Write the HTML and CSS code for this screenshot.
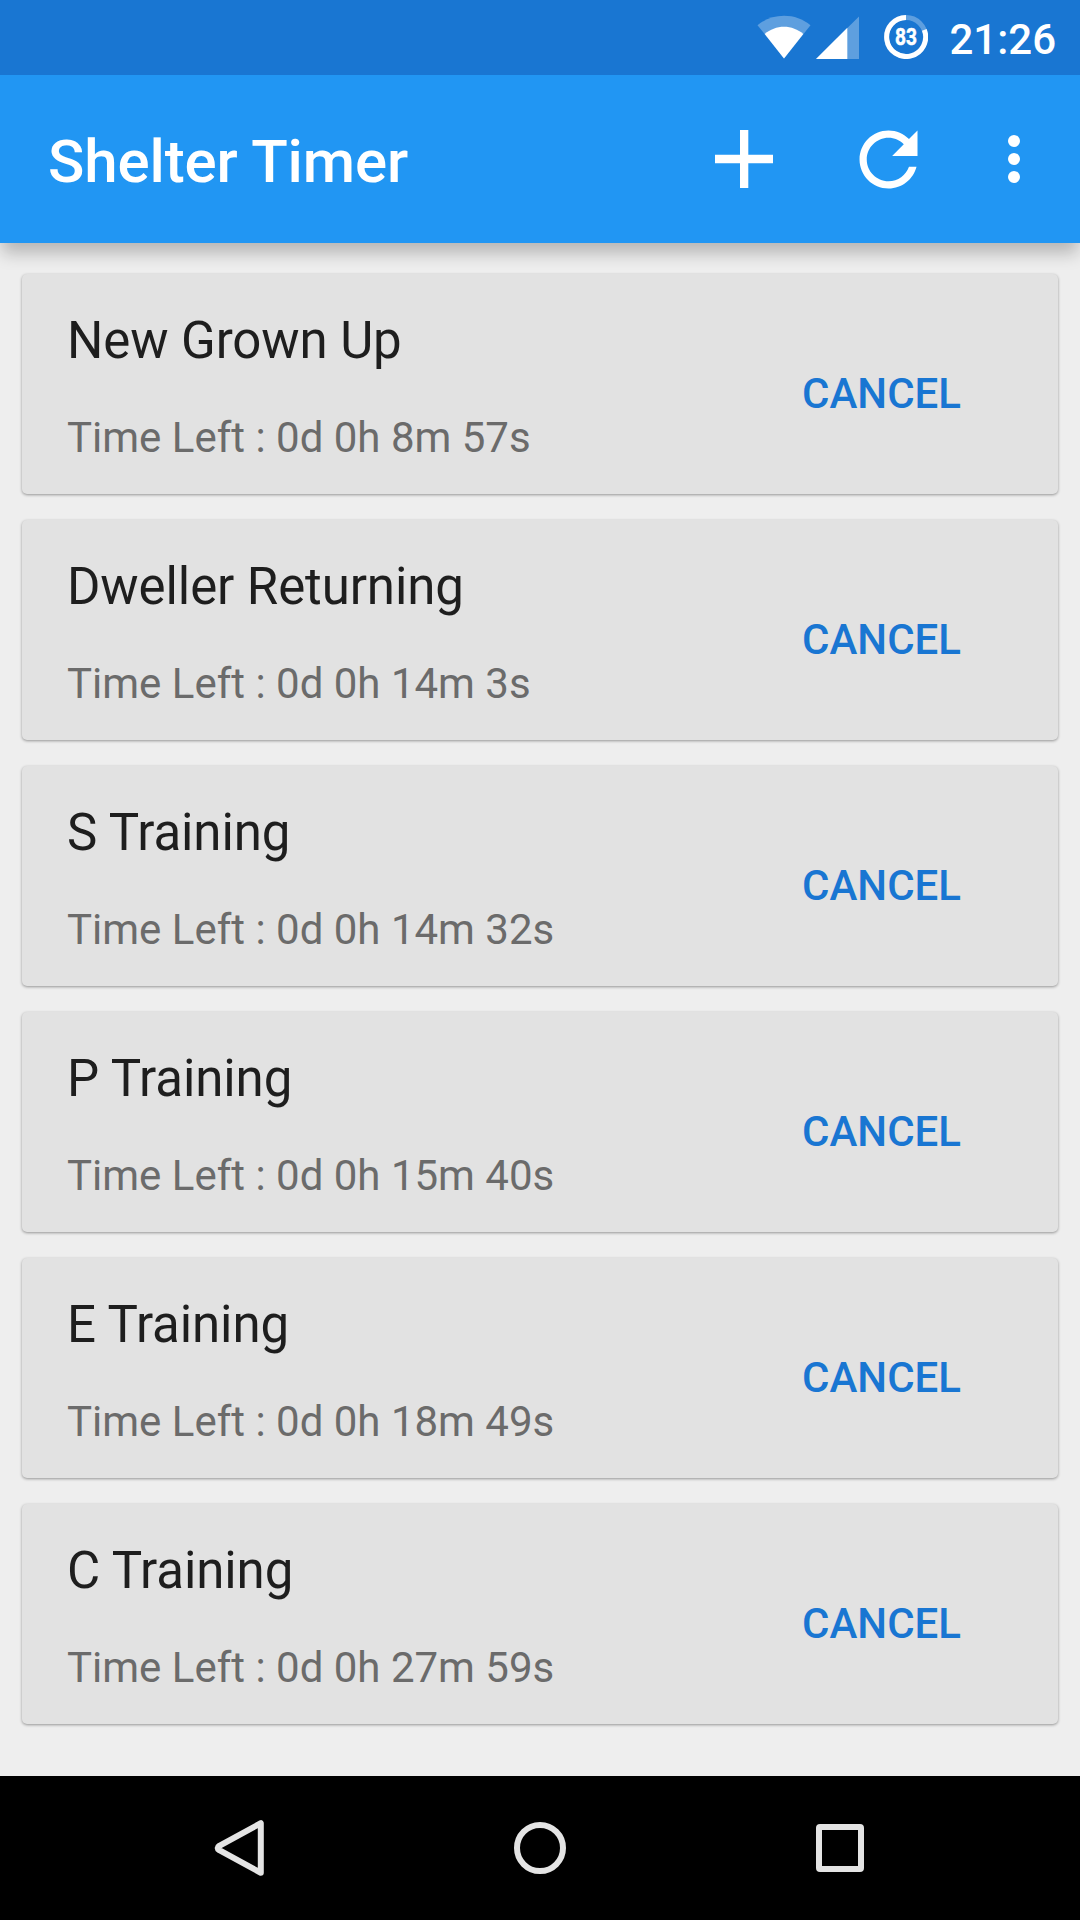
FILE: index.html
```html
<!DOCTYPE html>
<html lang="en">
<head>
<meta charset="utf-8">
<title>Shelter Timer</title>
<link rel="stylesheet" href="styles.css">
</head>
<body>
<div class="screen">
  <div class="status-bar">
    <svg class="wifi" width="54" height="44" viewBox="0 0 54 44" fill="#fff">
      <path opacity=".3" d="M27 43.5 0.5 10.2C8 4 17 .7 27 .7S46 4 53.500 10.200Z"/>
      <path d="M27 43.500 7.700 18.900C13 14.500 20 11.800 27 11.800S41 14.500 46.300 18.900Z"/>
    </svg>
    <svg class="signal" width="43" height="43" viewBox="0 0 43 43" fill="#fff">
      <path opacity=".3" d="M0 43 43 .5V43Z"/>
      <path d="M0 43 31.300 11.700V43Z"/>
    </svg>
    <svg class="battery" width="44" height="44" viewBox="0 0 44 44" fill="none" stroke="#fff" stroke-width="5">
      <circle cx="22" cy="22" r="19.500" opacity=".3"/>
      <path d="M40.300 14.800A19.500 19.500 0 1 1 22 2.500"/>
      <text class="battery-level" x="22" y="30.200" text-anchor="middle" textLength="22" lengthAdjust="spacingAndGlyphs">83</text>
    </svg>
    <span class="clock">21:26</span>
  </div>

  <header class="toolbar">
    <h1 class="app-title">Shelter Timer</h1>
    <button class="action" aria-label="Add">
      <svg width="58" height="58" viewBox="0 0 58 58" fill="#fff"><path d="M25 0h8.300v24.800H58v8.400H33.300V58H25V33.200H0v-8.400h25Z"/></svg>
    </button>
    <button class="action" aria-label="Refresh">
      <svg width="87" height="87" viewBox="0 0 24 24" fill="#fff"><path d="M17.650 6.350C16.200 4.900 14.210 4 12 4c-4.420 0-7.990 3.580-7.990 8s3.570 8 7.990 8c3.730 0 6.840-2.550 7.730-6h-2.080c-.82 2.330-3.040 4-5.650 4-3.310 0-6-2.690-6-6s2.690-6 6-6c1.660 0 3.140.69 4.220 1.780L13 11h7V4l-2.350 2.350z"/></svg>
    </button>
    <button class="action overflow" aria-label="More options">
      <svg width="12" height="48" viewBox="0 0 12 48" fill="#fff"><circle cx="6" cy="6" r="6"/><circle cx="6" cy="24" r="6"/><circle cx="6" cy="42" r="6"/></svg>
    </button>
  </header>

  <main class="timers">
    <article class="card">
      <div class="info"><h2 class="name">New Grown Up</h2><p class="left">Time Left : 0d 0h 8m 57s</p></div>
      <button class="cancel">CANCEL</button>
    </article>
    <article class="card">
      <div class="info"><h2 class="name">Dweller Returning</h2><p class="left">Time Left : 0d 0h 14m 3s</p></div>
      <button class="cancel">CANCEL</button>
    </article>
    <article class="card">
      <div class="info"><h2 class="name">S Training</h2><p class="left">Time Left : 0d 0h 14m 32s</p></div>
      <button class="cancel">CANCEL</button>
    </article>
    <article class="card">
      <div class="info"><h2 class="name">P Training</h2><p class="left">Time Left : 0d 0h 15m 40s</p></div>
      <button class="cancel">CANCEL</button>
    </article>
    <article class="card">
      <div class="info"><h2 class="name">E Training</h2><p class="left">Time Left : 0d 0h 18m 49s</p></div>
      <button class="cancel">CANCEL</button>
    </article>
    <article class="card">
      <div class="info"><h2 class="name">C Training</h2><p class="left">Time Left : 0d 0h 27m 59s</p></div>
      <button class="cancel">CANCEL</button>
    </article>
  </main>

  <nav class="nav-bar">
    <svg width="60" height="60" viewBox="0 0 60 60"><path d="M50.800 5.200V54.800L9.300 32.200Q6 30 9.300 27.800Z"/></svg>
    <svg width="60" height="60" viewBox="0 0 60 60"><circle cx="30" cy="30" r="23"/></svg>
    <svg width="60" height="60" viewBox="0 0 60 60"><rect x="9" y="9" width="42" height="42" rx="1"/></svg>
  </nav>
</div>
</body>
</html>
```
FILE: styles.css
```css
* {
  box-sizing: border-box;
  margin: 0;
  padding: 0;
}

body {
  font-family: Roboto, "Noto Sans", sans-serif;
  background: #eee;
}

button {
  border: 0;
  background: none;
  font: inherit;
}

svg {
  display: block;
}

.screen {
  display: flex;
  flex-direction: column;
  width: 1080px;
  height: 1920px;
  overflow: hidden;
}

.status-bar {
  display: flex;
  align-items: flex-start;
  justify-content: flex-end;
  z-index: 2;
  height: 75px;
  padding: 15px 24px 0 0;
  background: #1976d2;
  color: #fff;
}

.wifi {
  margin-right: 5px;
}

.signal {
  margin: 1px 25px 0 0;
}

.battery {
  margin-right: 21px;
}

.battery-level {
  fill: #fff;
  stroke: #fff;
  stroke-width: .5px;
  font-size: 23px;
  font-weight: 700;
}

.clock {
  font-size: 42px;
  font-weight: 500;
  line-height: 50px;
}

.toolbar {
  display: flex;
  align-items: center;
  z-index: 1;
  height: 168px;
  padding: 0 12px 0 48px;
  background: #2196f3;
  box-shadow: 0 12px 16px -2px rgba(0, 0, 0, .24);
}

.app-title {
  flex: 1;
  padding-top: 5px;
  color: #fff;
  font-size: 60px;
  font-weight: 500;
  letter-spacing: -.1px;
  line-height: 70px;
}

.action {
  display: flex;
  align-items: center;
  justify-content: center;
  width: 144px;
  height: 144px;
}

.overflow {
  width: 108px;
}

.timers {
  display: flex;
  flex: 1;
  flex-direction: column;
  gap: 26px;
  padding: 31px 22px 0;
}

.card {
  display: flex;
  align-items: flex-start;
  justify-content: space-between;
  height: 220px;
  padding: 35px 97px 0 45px;
  border-radius: 5px;
  background: #e2e2e2;
  box-shadow: 0 1px 3px rgba(0, 0, 0, .38);
}

.name {
  color: #1e1e1e;
  font-size: 51px;
  font-weight: 400;
  letter-spacing: -.1px;
  line-height: 64px;
}

.left {
  margin-top: 40px;
  color: #6b6b6b;
  font-size: 42px;
  line-height: 50px;
}

.cancel {
  margin-top: 60px;
  color: #1976d2;
  font-size: 42px;
  font-weight: 500;
  line-height: 50px;
}

.nav-bar {
  display: flex;
  align-items: center;
  justify-content: center;
  gap: 240px;
  height: 144px;
  background: #000;
  fill: none;
  stroke: #e4e4e4;
  stroke-width: 6;
  stroke-linejoin: round;
}
```
